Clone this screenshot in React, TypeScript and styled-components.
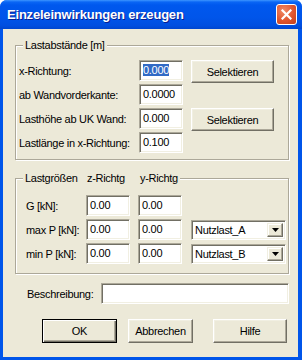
import React from 'react'
import styled, { createGlobalStyle } from 'styled-components'

const GlobalStyle = createGlobalStyle`
  html, body {
    margin: 0;
    padding: 0;
    background: #ffffff;
  }
  body {
    font-family: "Liberation Sans", Arial, sans-serif;
    font-size: 11px;
    letter-spacing: -0.3px;
    color: #000000;
  }
`

const Window = styled.div`
  width: 302px;
  height: 360px;
  box-sizing: border-box;
  display: flex;
  flex-direction: column;
  background: #0055ea;
  border-radius: 7px 7px 0 0;
  overflow: hidden;
`

const TitleBar = styled.div`
  height: 29px;
  flex: none;
  display: flex;
  align-items: center;
  justify-content: space-between;
  padding: 0 5px 0 7px;
  background: linear-gradient(
    to bottom,
    #3d95ff 0px,
    #0a66f5 2px,
    #0058ee 5px,
    #0055ea 60%,
    #004fe0 88%,
    #0046cf 100%
  );
  .title {
    font-family: "Liberation Sans", Arial, sans-serif;
    font-weight: bold;
    font-size: 13px;
    letter-spacing: -0.2px;
    color: #ffffff;
    text-shadow: 1px 1px 0 #0a1f8f;
  }
`

const CloseButton = styled.div`
  width: 21px;
  height: 21px;
  box-sizing: border-box;
  border: 1px solid #ffffff;
  border-radius: 3px;
  background: radial-gradient(circle at 35% 30%, #f08a66 0%, #e0552e 55%, #c2401c 100%);
  display: flex;
  align-items: center;
  justify-content: center;
`

const Client = styled.div`
  flex: 1;
  margin: 0 4px 3px 3px;
  background: #ece9d8;
  padding-top: 10px;
  display: flex;
  flex-direction: column;
`

const Group = styled.fieldset<{ $pad: string }>`
  margin: 0 0 0 12px;
  width: 274px;
  box-sizing: border-box;
  border: 1px solid #aca899;
  box-shadow: inset 1px 1px #ffffff, 1px 1px #ffffff;
  padding: ${(p) => p.$pad};
  min-width: 0;
  & + & {
    margin-top: 12px;
  }
`

const Legend = styled.legend`
  margin-left: 7px;
  padding: 0 2px;
  background: #ece9d8;
  line-height: 13px;
  display: flex;
`

const LegendCell = styled.span<{ $w?: number }>`
  width: ${(p) => (p.$w ? `${p.$w}px` : 'auto')};
`

const PlacementGrid = styled.div`
  display: grid;
  grid-template-columns: 112px 44px 83px;
  grid-auto-rows: 21px;
  column-gap: 8px;
  row-gap: 3px;
  align-items: center;
  padding-left: 3px;
`

const LoadGrid = styled.div`
  display: grid;
  grid-template-columns: 52px 44px 44px 96px;
  grid-auto-rows: 21px;
  column-gap: 8px;
  row-gap: 3px;
  align-items: center;
  padding-left: 10px;
`

const Label = styled.span`
  white-space: nowrap;
`

const Field = styled.div<{ $w?: number }>`
  width: ${(p) => (p.$w ? `${p.$w}px` : '100%')};
  height: 21px;
  box-sizing: border-box;
  background: #ffffff;
  border: 1px solid;
  border-color: #aca899 #ffffff #ffffff #aca899;
  box-shadow: inset 1px 1px #716f64, inset -1px -1px #f1efe2;
  padding: 3px 0 0 3px;
  line-height: 13px;
  white-space: nowrap;
  overflow: hidden;
`

const Selected = styled.span`
  background: #316ac5;
  color: #ffffff;
`

const Button = styled.div<{ $w: number; $h?: number; $default?: boolean }>`
  width: ${(p) => p.$w}px;
  height: ${(p) => p.$h ?? 23}px;
  box-sizing: border-box;
  display: flex;
  align-items: center;
  justify-content: center;
  background: #ece9d8;
  border: 1px solid;
  border-color: ${(p) => (p.$default ? '#000000' : '#ffffff #716f64 #716f64 #ffffff')};
  box-shadow: ${(p) =>
    p.$default
      ? 'inset 1px 1px #ffffff, inset -1px -1px #716f64, inset -2px -2px #aca899'
      : 'inset -1px -1px #aca899, inset 1px 1px #f1efe2'};
  align-self: start;
`

const Combo = styled.div`
  height: 20px;
  box-sizing: border-box;
  background: #ffffff;
  border: 1px solid;
  border-color: #aca899 #ffffff #ffffff #aca899;
  box-shadow: inset 1px 1px #716f64, inset -1px -1px #f1efe2;
  display: flex;
  align-items: stretch;
  padding: 2px;
  margin-left: 1px;
  align-self: end;
  .text {
    flex: 1;
    padding-left: 1px;
    line-height: 14px;
  }
`

const ComboArrow = styled.div`
  width: 16px;
  box-sizing: border-box;
  background: #ece9d8;
  border: 1px solid;
  border-color: #f1efe2 #716f64 #716f64 #f1efe2;
  box-shadow: inset -1px -1px #aca899, inset 1px 1px #ffffff;
  display: flex;
  align-items: center;
  justify-content: center;
`

const DescRow = styled.div`
  display: flex;
  align-items: center;
  margin: 9px 0 0 24px;
  .label {
    width: 74px;
  }
`

const ButtonRow = styled.div`
  display: flex;
  margin: 15px 0 0 39px;
  & > :nth-child(2) {
    margin-left: 11px;
  }
  & > :nth-child(3) {
    margin-left: 20px;
  }
`

function Arrow() {
  return (
    <svg width="7" height="4" viewBox="0 0 7 4">
      <path d="M0 0H7L3.5 4Z" fill="#000" />
    </svg>
  )
}

function ComboBox({ value }: { value: string }) {
  return (
    <Combo>
      <span className="text">{value}</span>
      <ComboArrow>
        <Arrow />
      </ComboArrow>
    </Combo>
  )
}

export default function App() {
  return (
    <>
      <GlobalStyle />
      <Window>
        <TitleBar>
          <span className="title">Einzeleinwirkungen erzeugen</span>
          <CloseButton>
            <svg width="11" height="11" viewBox="0 0 11 11">
              <path d="M1.5 1.5L9.5 9.5M9.5 1.5L1.5 9.5" stroke="#fff" strokeWidth="2.2" strokeLinecap="square" />
            </svg>
          </CloseButton>
        </TitleBar>
        <Client>
          <Group $pad="8px 0 6px">
            <Legend>Lastabstände [m]</Legend>
            <PlacementGrid>
              <Label>x-Richtung:</Label>
              <Field>
                <Selected>0.000</Selected>
              </Field>
              <Button $w={83}>Selektieren</Button>
              <Label>ab Wandvorderkante:</Label>
              <Field>0.0000</Field>
              <span />
              <Label>Lasthöhe ab UK Wand:</Label>
              <Field>0.000</Field>
              <Button $w={83}>Selektieren</Button>
              <Label>Lastlänge in x-Richtung:</Label>
              <Field>0.100</Field>
            </PlacementGrid>
          </Group>
          <Group $pad="10px 0 9px">
            <Legend>
              <LegendCell $w={62}>Lastgrößen</LegendCell>
              <LegendCell $w={53}>z-Richtg</LegendCell>
              <LegendCell>y-Richtg</LegendCell>
            </Legend>
            <LoadGrid>
              <Label>G [kN]:</Label>
              <Field>0.00</Field>
              <Field>0.00</Field>
              <span />
              <Label>max P [kN]:</Label>
              <Field>0.00</Field>
              <Field>0.00</Field>
              <ComboBox value="Nutzlast_A" />
              <Label>min P [kN]:</Label>
              <Field>0.00</Field>
              <Field>0.00</Field>
              <ComboBox value="Nutzlast_B" />
            </LoadGrid>
          </Group>
          <DescRow>
            <span className="label">Beschreibung:</span>
            <Field $w={188} />
          </DescRow>
          <ButtonRow>
            <Button $w={75} $h={24} $default>
              OK
            </Button>
            <Button $w={65} $h={24}>
              Abbrechen
            </Button>
            <Button $w={74} $h={24}>
              Hilfe
            </Button>
          </ButtonRow>
        </Client>
      </Window>
    </>
  )
}
